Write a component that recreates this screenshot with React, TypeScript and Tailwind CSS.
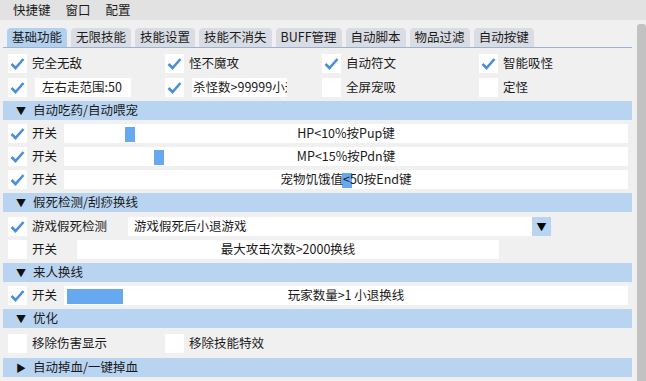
import React from 'react'

const font = { fontFamily: '"Noto Sans CJK SC", "Noto Sans", sans-serif' }

const Check: React.FC<{ on?: boolean }> = ({ on }) => (
  <div className="w-[19px] h-[19px] bg-white shrink-0 flex items-center justify-center">
    {on && (
      <svg width="19" height="19" viewBox="0 0 19 19">
        <polyline points="3.5,10 7.5,14 15.5,5" fill="none" stroke="#4a8fdc" strokeWidth="2.6" />
      </svg>
    )}
  </div>
)

const Header: React.FC<{ title: string; open?: boolean }> = ({ title, open = true }) => (
  <div className="h-[19px] w-[629px] ml-[3px] bg-[#b8d4f1] flex items-center shrink-0">
    <span className="w-[30px] pl-[13px] text-[10px] leading-none text-[#111]">{open ? '▼' : '▶'}</span>
    <span>{title}</span>
  </div>
)

const SliderRow: React.FC<{ text: string; left: number; width?: number }> = ({ text, left, width = 10 }) => (
  <div className="h-[19px] flex items-center pl-[8px] shrink-0">
    <Check on />
    <span className="w-[37px] pl-[5px]">开关</span>
    <div className="relative h-[19px] w-[564px] bg-white flex items-center justify-center">
      <div className="absolute top-[3px] bottom-[1px] bg-[#66a9f0]" style={{ left, width }} />
      <span className="relative">{text}</span>
    </div>
  </div>
)

const tabs = ['基础功能', '无限技能', '技能设置', '技能不消失', 'BUFF管理', '自动脚本', '物品过滤', '自动按键']

export default function App() {
  return (
    <div className="w-[646px] h-[381px] overflow-hidden bg-[#f0f0f0] text-[12.5px] text-[#1a1a1a]" style={font}>
      <div className="h-[20px] bg-[#e2e2e2] flex items-center pl-[13px] gap-[15px]">
        <span>快捷键</span>
        <span>窗口</span>
        <span>配置</span>
      </div>
      <div className="flex h-[361px]">
        <div className="w-[637px] flex flex-col">
          <div className="h-[27px] flex items-end gap-[4px] pl-[7px] pr-[5px]">
            {tabs.map((t, i) => (
              <div
                key={t}
                className={`h-[19px] px-[5px] rounded-t-[4px] flex items-center ${i === 0 ? 'bg-[#b3d0ef]' : 'bg-[#d9dde3]'}`}
              >
                {t}
              </div>
            ))}
          </div>
          <div className="h-px w-[629px] ml-[3px] bg-[#9db4d0]" />
          <div className="flex flex-col gap-[4px] pt-[5px]">
            <div className="h-[20px] grid grid-cols-4 pl-[8px] w-[636px] items-center">
              {['完全无敌', '怪不魔攻', '自动符文', '智能吸怪'].map(t => (
                <div key={t} className="flex items-center">
                  <Check on />
                  <span className="pl-[5px]">{t}</span>
                </div>
              ))}
            </div>
            <div className="h-[20px] grid grid-cols-4 pl-[8px] w-[636px] items-center">
              <div className="flex items-center">
                <Check on />
                <div className="ml-[8px] w-[96px] h-[19px] bg-white pl-[7px] flex items-center">左右走范围:50</div>
              </div>
              <div className="flex items-center">
                <Check on />
                <div className="ml-[8px] w-[95px] h-[19px] bg-white pl-[1px] flex items-center overflow-hidden whitespace-nowrap">
                  杀怪数&gt;99999小退
                </div>
              </div>
              <div className="flex items-center">
                <Check />
                <span className="pl-[5px]">全屏宠吸</span>
              </div>
              <div className="flex items-center">
                <Check />
                <span className="pl-[5px]">定怪</span>
              </div>
            </div>
            <Header title="自动吃药/自动喂宠" />
            <SliderRow text="HP<10%按Pup键" left={61} />
            <SliderRow text="MP<15%按Pdn键" left={90} />
            <SliderRow text="宠物饥饿值<50按End键" left={278} />
            <Header title="假死检测/刮痧换线" />
            <div className="h-[20px] flex items-center pl-[8px] shrink-0">
              <Check on />
              <span className="w-[101px] pl-[5px]">游戏假死检测</span>
              <div className="w-[404px] h-[19px] bg-white flex items-center pl-[6px]">游戏假死后小退游戏</div>
              <div className="w-[19px] h-[19px] bg-[#b8d4f1] flex items-center justify-center text-[10px] text-black">▼</div>
            </div>
            <div className="h-[19px] flex items-center pl-[8px] shrink-0">
              <Check />
              <span className="w-[50px] pl-[5px]">开关</span>
              <div className="w-[422px] h-[19px] bg-white flex items-center justify-center">最大攻击次数&gt;2000换线</div>
            </div>
            <Header title="来人换线" />
            <SliderRow text="玩家数量>1 小退换线" left={3} width={56} />
            <Header title="优化" />
            <div className="h-[22px] grid grid-cols-4 pl-[8px] w-[636px] items-center">
              {['移除伤害显示', '移除技能特效'].map(t => (
                <div key={t} className="flex items-center">
                  <Check />
                  <span className="pl-[5px]">{t}</span>
                </div>
              ))}
            </div>
            <Header title="自动掉血/一键掉血" open={false} />
          </div>
        </div>
        <div className="w-[9px] mt-[4px] bg-[#c2c2c2] rounded-t-[3px]" />
      </div>
    </div>
  )
}
